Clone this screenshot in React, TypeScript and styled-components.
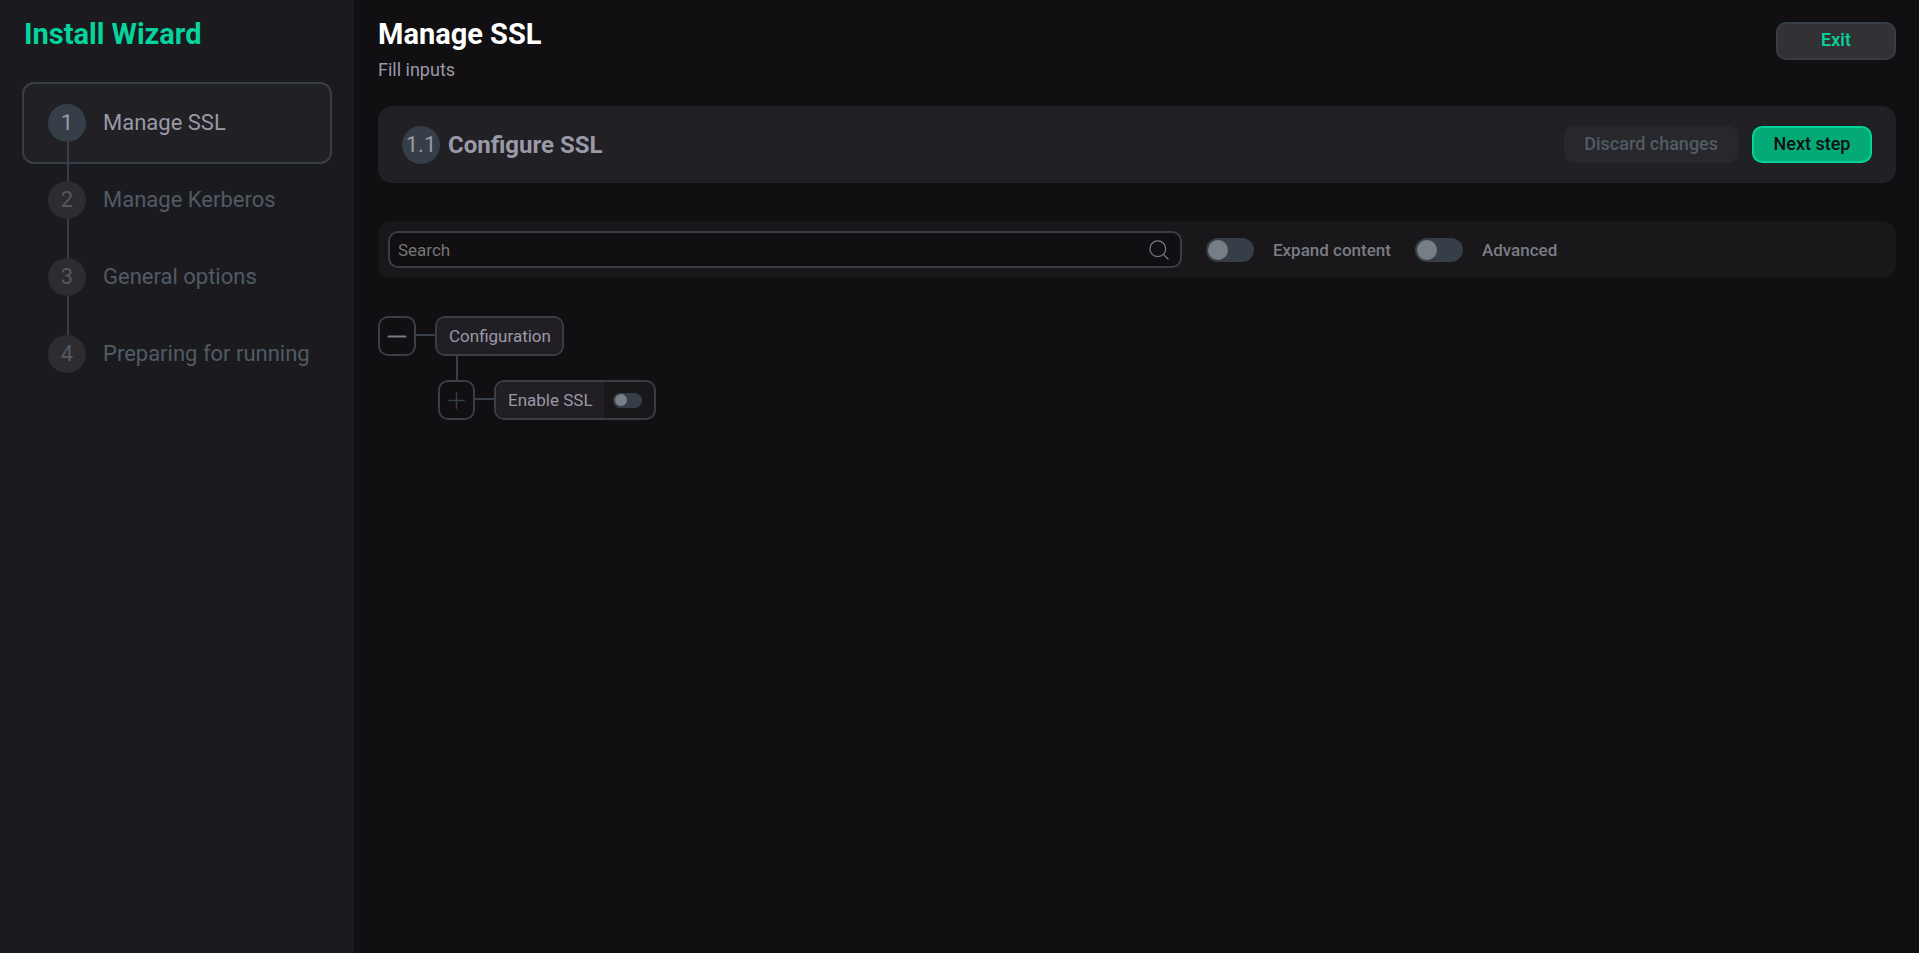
import React, { useState } from "react";
import styled, { createGlobalStyle, css } from "styled-components";

const color = {
  page: "#110f12",
  sidebar: "#1b1a1e",
  card: "#212024",
  toolbar: "#19171a",
  node: "#211f24",
  line: "#363f47",
  muted: "#515b65",
  text: "#9a99a7",
  grey: "#797d85",
  accent: "#04d59c",
};

const GlobalStyle = createGlobalStyle`
  *, *::before, *::after { box-sizing: border-box; }
  html { background: ${color.page}; }
  body {
    margin: 0;
    background: ${color.page};
    color: ${color.text};
    font-family: Roboto, "Liberation Sans", sans-serif;
    font-size: 16px;
  }
  button, input { font-family: inherit; }
  h1, h2, p, ol, ul { margin: 0; padding: 0; }
  ol, ul { list-style: none; }
`;

const Page = styled.div`
  display: flex;
  min-height: 100vh;
`;

const Sidebar = styled.aside`
  flex: none;
  width: 354px;
  padding: 16px 22px;
  background: ${color.sidebar};
`;

const Brand = styled.h1`
  padding-left: 2px;
  color: ${color.accent};
  font-size: 29px;
  font-weight: 700;
  line-height: 36px;
`;

const Steps = styled.ol`
  display: flex;
  flex-direction: column;
  margin-top: 30px;
`;

const Step = styled.li<{ $active?: boolean }>`
  height: 77px;
  display: flex;
  align-items: center;

  ${(p) =>
    p.$active &&
    css`
      height: 82px;
      margin-bottom: -3px;
      background: ${color.card};
      border-radius: 12px;
      box-shadow: inset 0 0 0 2px ${color.line};
    `}
`;

const StepLink = styled.a<{ $active?: boolean }>`
  display: flex;
  align-items: center;
  gap: 17px;
  padding-left: 26px;
  color: ${(p) => (p.$active ? color.text : color.muted)};
  font-size: 22px;
  line-height: 26px;
  text-decoration: none;
`;

const Circle = styled.span<{ $active?: boolean; $linked?: boolean }>`
  position: relative;
  display: flex;
  flex: none;
  align-items: center;
  justify-content: center;
  width: 38px;
  height: 38px;
  border-radius: 50%;
  background: ${(p) => (p.$active ? color.line : "#2d2c31")};
  font-size: 22px;
  line-height: 26px;

  ${(p) =>
    p.$linked &&
    css`
      &::after {
        content: "";
        position: absolute;
        top: 100%;
        left: 19px;
        width: 2px;
        height: 39px;
        background: ${color.line};
      }
    `}
`;

const Main = styled.main`
  flex: 1;
  min-width: 0;
  padding: 16px 23px 24px 24px;
`;

const Header = styled.header`
  display: flex;
  justify-content: space-between;
  align-items: flex-start;
`;

const Title = styled.h1`
  color: #fff;
  font-size: 29px;
  font-weight: 700;
  line-height: 36px;
`;

const Subtitle = styled.p`
  margin-top: 6px;
  font-size: 18px;
  line-height: 24px;
`;

const Button = styled.button<{ $kind: "plain" | "primary" | "disabled" }>`
  min-width: 120px;
  height: 37px;
  padding: 0 18px 2px;
  border: 2px solid;
  border-radius: 10px;
  font-size: 18px;
  font-weight: 500;
  line-height: 22px;

  ${(p) =>
    p.$kind === "plain" &&
    css`
      height: 38px;
      margin-top: 6px;
      background: #323136;
      border-color: ${color.line};
      color: ${color.accent};
    `}
  ${(p) =>
    p.$kind === "primary" &&
    css`
      background: #04aa75;
      border-color: ${color.accent};
      color: ${color.page};
    `}
  ${(p) =>
    p.$kind === "disabled" &&
    css`
      background: #28272b;
      border-color: #28272b;
      color: ${color.muted};
    `}
`;

const StepPanel = styled.section`
  display: flex;
  align-items: center;
  gap: 8px;
  height: 77px;
  margin-top: 24px;
  padding: 0 24px;
  border-radius: 14px;
  background: ${color.card};
`;

const PanelTitle = styled.h2`
  flex: 1;
  font-size: 24px;
  font-weight: 700;
  line-height: 28px;
`;

const Actions = styled.div`
  display: flex;
  gap: 14px;
`;

const Toolbar = styled.div`
  display: flex;
  align-items: center;
  gap: 24px;
  height: 57px;
  margin-top: 38px;
  padding: 0 10px;
  border-radius: 14px;
  background: ${color.toolbar};
`;

const SearchBox = styled.label`
  display: flex;
  align-items: center;
  width: 53%;
  height: 37px;
  padding: 0 11px 0 8px;
  border: 2px solid ${color.line};
  border-radius: 10px;
  background: ${color.page};
`;

const SearchInput = styled.input`
  flex: 1;
  min-width: 0;
  padding: 0;
  border: 0;
  outline: 0;
  background: transparent;
  color: ${color.text};
  font-size: 17px;
  line-height: 22px;

  &::placeholder {
    color: #757575;
    opacity: 1;
  }
`;

const SwitchLabel = styled.label`
  display: flex;
  align-items: center;
  gap: 19px;
  color: ${color.grey};
  font-size: 17px;
  font-weight: 500;
  line-height: 22px;
`;

const Switch = styled.input.attrs({ type: "checkbox", role: "switch" })<{ $small?: boolean }>`
  appearance: none;
  display: flex;
  align-items: center;
  flex: none;
  width: ${(p) => (p.$small ? 29 : 48)}px;
  height: ${(p) => (p.$small ? 15 : 24)}px;
  margin: 0;
  padding: 0 2px;
  border-radius: 12px;
  background: ${color.line};

  &::before {
    content: "";
    width: ${(p) => (p.$small ? 12 : 20)}px;
    height: ${(p) => (p.$small ? 12 : 20)}px;
    border-radius: 50%;
    background: ${color.grey};
  }
  &:checked {
    justify-content: flex-end;
  }
`;

const Tree = styled.ul`
  margin-top: 38px;
`;

const Branch = styled.ul`
  padding-left: 60px;
`;

const TreeRow = styled.div`
  display: flex;
  align-items: center;
`;

const Toggle = styled.button<{ $open?: boolean }>`
  display: flex;
  flex: none;
  align-items: center;
  justify-content: center;
  width: ${(p) => (p.$open ? 38 : 37)}px;
  height: 40px;
  padding: 0;
  border: 2px solid ${color.line};
  border-radius: 10px;
  background: transparent;
  color: ${(p) => (p.$open ? color.grey : color.line)};
`;

const HLine = styled.span`
  width: 19px;
  height: 2px;
  margin-bottom: 2px;
  background: ${color.line};
`;

const VLine = styled.div`
  width: 2px;
  height: 24px;
  margin-left: 78px;
  background: ${color.line};
`;

const Node = styled.div`
  display: flex;
  height: 40px;
  overflow: hidden;
  border: 2px solid ${color.line};
  border-radius: 10px;
  background: ${color.toolbar};
`;

const NodeName = styled.span`
  display: flex;
  align-items: center;
  padding: 0 11px 0 12px;
  background: ${color.node};
  font-size: 17px;
  line-height: 22px;
`;

const NodeValue = styled.span`
  display: flex;
  align-items: center;
  padding: 0 12px 0 9px;
`;

const SearchIcon = () => (
  <svg width="20" height="20" viewBox="0 0 20 20" fill="none" stroke={color.grey} strokeWidth="1.2" strokeLinecap="round" aria-hidden="true">
    <circle cx="8.8" cy="8.8" r="7.9" />
    <path d="M14.4 14.4 19 19" />
  </svg>
);

const MinusIcon = () => (
  <svg width="20" height="20" viewBox="0 0 20 20" stroke="currentColor" strokeWidth="2" strokeLinecap="round" aria-hidden="true">
    <path d="M1.5 10.5h17" />
  </svg>
);

const PlusIcon = () => (
  <svg width="17" height="17" viewBox="0 0 17 17" stroke="currentColor" strokeWidth="1.4" strokeLinecap="round" aria-hidden="true">
    <path d="M.8 8.5h15.4M8.5.8v15.4" />
  </svg>
);

const steps = ["Manage SSL", "Manage Kerberos", "General options", "Preparing for running"];

export default function App() {
  const [query, setQuery] = useState("");

  return (
    <>
      <GlobalStyle />
      <Page>
        <Sidebar>
          <Brand>Install Wizard</Brand>
          <Steps>
            {steps.map((label, i) => (
              <Step key={label} $active={i === 0}>
                <StepLink href="#" $active={i === 0}>
                  <Circle $active={i === 0} $linked={i < steps.length - 1}>
                    {i + 1}
                  </Circle>
                  {label}
                </StepLink>
              </Step>
            ))}
          </Steps>
        </Sidebar>
        <Main>
          <Header>
            <div>
              <Title>Manage SSL</Title>
              <Subtitle>Fill inputs</Subtitle>
            </div>
            <Button $kind="plain">Exit</Button>
          </Header>
          <StepPanel>
            <Circle $active>1.1</Circle>
            <PanelTitle>Configure SSL</PanelTitle>
            <Actions>
              <Button $kind="disabled" disabled>
                Discard changes
              </Button>
              <Button $kind="primary">Next step</Button>
            </Actions>
          </StepPanel>
          <Toolbar>
            <SearchBox>
              <SearchInput
                type="text"
                placeholder="Search"
                aria-label="Search"
                value={query}
                onChange={(e) => setQuery(e.target.value)}
              />
              <SearchIcon />
            </SearchBox>
            <SwitchLabel>
              <Switch />
              Expand content
            </SwitchLabel>
            <SwitchLabel>
              <Switch />
              Advanced
            </SwitchLabel>
          </Toolbar>
          <Tree>
            <li>
              <TreeRow>
                <Toggle $open aria-label="Collapse Configuration">
                  <MinusIcon />
                </Toggle>
                <HLine />
                <Node>
                  <NodeName>Configuration</NodeName>
                </Node>
              </TreeRow>
              <VLine />
              <Branch>
                <li>
                  <TreeRow>
                    <Toggle aria-label="Expand Enable SSL">
                      <PlusIcon />
                    </Toggle>
                    <HLine />
                    <Node>
                      <NodeName id="enable-ssl">Enable SSL</NodeName>
                      <NodeValue>
                        <Switch $small aria-labelledby="enable-ssl" />
                      </NodeValue>
                    </Node>
                  </TreeRow>
                </li>
              </Branch>
            </li>
          </Tree>
        </Main>
      </Page>
    </>
  );
}
